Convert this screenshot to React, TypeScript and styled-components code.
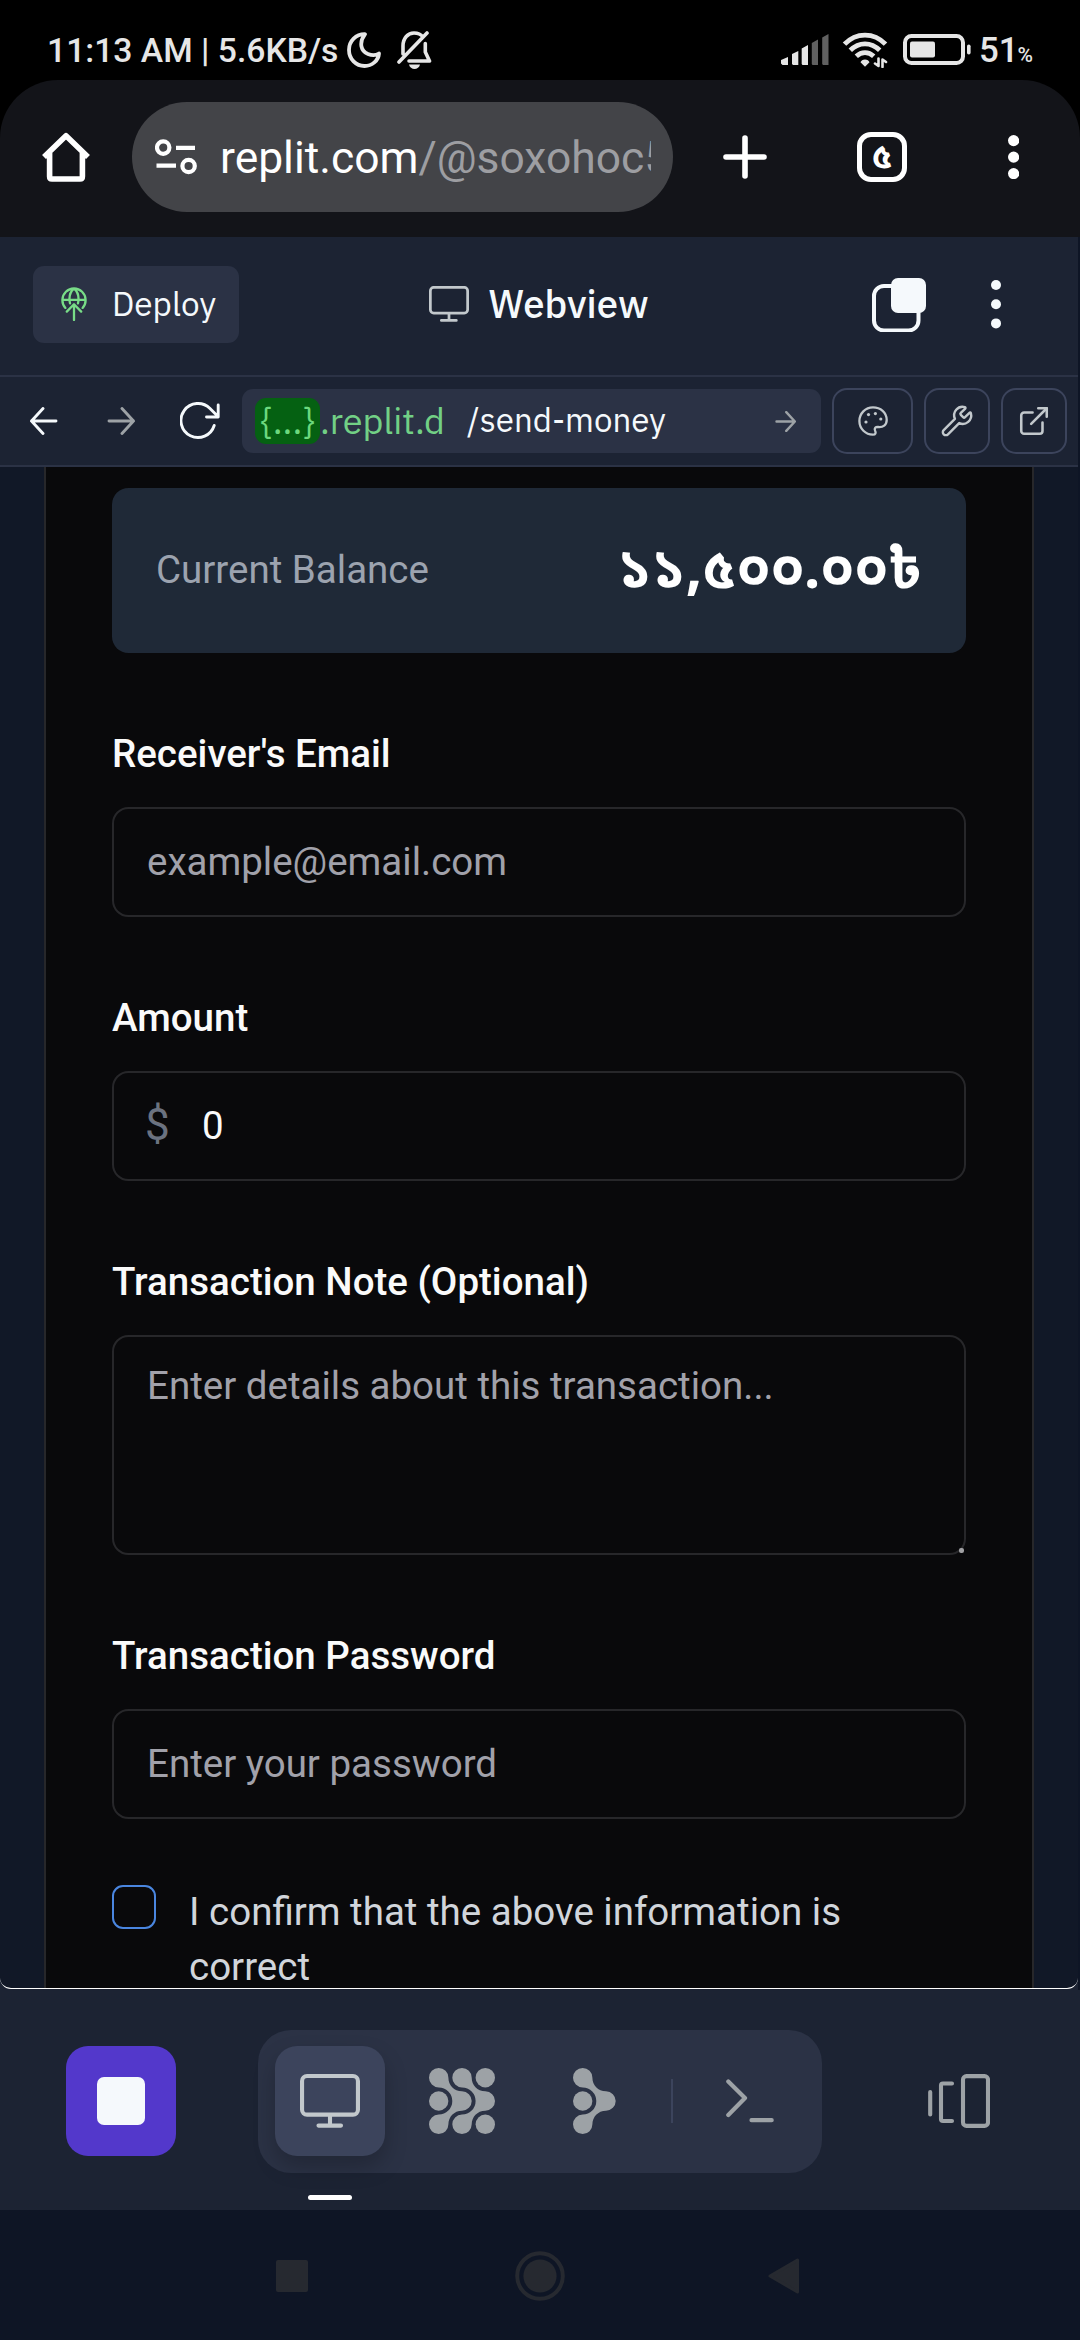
import React from "react";
import styled, { createGlobalStyle } from "styled-components";
import { ExternalLink, Wrench } from "lucide-react";

const GlobalStyle = createGlobalStyle`
  *, *::before, *::after { box-sizing: border-box; }
  body { margin: 0; background: #0e1525; }
  svg { display: block; flex: none; }
`;

const roboto = `Roboto, "Noto Sans", sans-serif`;
const plex = `"IBM Plex Sans", Roboto, "Noto Sans", sans-serif`;
const bengali = `"Noto Sans Bengali", Roboto, "Noto Sans", sans-serif`;

const Screen = styled.div`
  width: 1080px;
  height: 2340px;
  display: flex;
  flex-direction: column;
  overflow: hidden;
  background: #0e1525;
  font-family: ${roboto};
`;

/* ---------- Android status bar ---------- */

const StatusBar = styled.div`
  flex: none;
  height: 80px;
  padding: 21px 47px 0;
  display: flex;
  justify-content: space-between;
  background: #000;
  color: #e6e6e6;
`;

const StatusGroup = styled.div`
  display: flex;
  align-items: center;
  height: 57px;
`;

const StatusText = styled.span<{ $ml?: number; $size?: number }>`
  margin-left: ${(p) => p.$ml ?? 0}px;
  padding-top: 1px;
  font-size: ${(p) => p.$size ?? 33.7}px;
  font-weight: 500;
  line-height: 57px;
  white-space: nowrap;
`;

const Percent = styled.small`
  margin-left: -1px;
  font-size: 21px;
  line-height: 1;
`;

const Glyph = styled.svg<{ $ml?: number }>`
  margin-left: ${(p) => p.$ml ?? 0}px;
  fill: none;
  stroke: currentColor;
  stroke-linecap: round;
  stroke-linejoin: round;
`;

const Battery = styled.svg`
  margin-left: 15px;
`;

/* ---------- Browser bar ---------- */

const BrowserBackdrop = styled.div`
  flex: none;
  background: #000;
`;

const BrowserBar = styled.div`
  height: 157px;
  padding: 0 0 3px 41px;
  display: flex;
  align-items: center;
  border-radius: 58px 58px 0 0;
  background: #131419;
  color: #fff;
`;

const Omnibox = styled.div`
  flex: 1;
  min-width: 0;
  height: 110px;
  margin-left: 41px;
  padding: 0 22px 0 23px;
  display: flex;
  align-items: center;
  border-radius: 55px;
  background: #434448;
`;

const Address = styled.div`
  flex: 1;
  min-width: 0;
  margin-left: 23px;
  padding-top: 2px;
  overflow: hidden;
  white-space: nowrap;
  font-size: 44.4px;
  line-height: 60px;
`;

const AddressPath = styled.span`
  color: #9d9ea2;
`;

const BarSlot = styled.div<{ $width: number }>`
  width: ${(p) => p.$width}px;
  display: flex;
  justify-content: center;
`;

const TabCount = styled.div`
  width: 50px;
  height: 50px;
  display: flex;
  align-items: center;
  justify-content: center;
  border: 5.5px solid #fff;
  border-radius: 14px;
  font: 700 34px / 33px ${bengali};
  padding-top: 4px;
`;

/* ---------- Workspace header ---------- */

const Header = styled.header`
  flex: none;
  width: 1078px;
  height: 140px;
  padding: 0 77px 3px 33px;
  display: grid;
  grid-template-columns: 1fr auto 1fr;
  align-items: center;
  border-bottom: 2px solid #2b3245;
  background: #1c2333;
  color: #f5f9fc;
  font-family: ${plex};
`;

const DeployButton = styled.button`
  width: 206px;
  height: 77px;
  padding: 0 0 2px 28px;
  display: flex;
  align-items: center;
  gap: 25px;
  border: 0;
  border-radius: 11px;
  background: #2b3245;
  color: #f5f9fc;
  font: 400 33.3px / 44px ${plex};
`;

const PaneTitle = styled.div`
  display: flex;
  align-items: center;
  gap: 19px;
  margin-left: 44px;
  padding-bottom: 2px;
  font-size: 38.4px;
  font-weight: 500;
  line-height: 48px;
`;

const TitleIcon = styled.span`
  color: #c2c8cc;
`;

const HeaderActions = styled.div`
  display: flex;
  align-items: center;
  justify-content: flex-end;
  gap: 65px;
`;

/* ---------- Webview toolbar ---------- */

const Toolbar = styled.div`
  flex: none;
  width: 1078px;
  height: 90px;
  padding: 0 11px;
  display: flex;
  align-items: center;
  gap: 11px;
  border-bottom: 2px solid #2b3245;
  background: #1c2333;
  color: #f5f9fc;
`;

const NavButton = styled.button<{ $muted?: boolean }>`
  flex: none;
  width: 66px;
  height: 66px;
  padding: 0;
  display: flex;
  align-items: center;
  justify-content: center;
  border: 0;
  background: none;
  color: ${(p) => (p.$muted ? "#9da2a6" : "#f5f9fc")};
`;

const UrlField = styled.div`
  flex: 1;
  height: 64px;
  padding: 0 25px 0 13px;
  display: flex;
  align-items: center;
  border-radius: 11px;
  background: #2b3245;
  font: 400 33.1px / 44px ${plex};
`;

const HostBadge = styled.span`
  width: 65px;
  height: 46px;
  display: flex;
  align-items: center;
  justify-content: center;
  border-radius: 11px;
  background: #056112;
  color: #6cd97e;
  font-size: 36.1px;
`;

const Host = styled.span`
  width: 147px;
  color: #72d085;
  font-size: 36px;
`;

const Path = styled.span`
  flex: 1;
  padding-bottom: 2px;
`;

const SubmitArrow = styled.span`
  color: #9da2a6;
`;

const ToolButton = styled(NavButton)<{ $width?: number }>`
  width: ${(p) => p.$width ?? 66}px;
  border: 2px solid #3c445c;
  border-radius: 15px;
  color: #c2c8cc;
`;

/* ---------- Web page ---------- */

const WebviewArea = styled.div`
  flex: none;
  width: 1078px;
  height: 1523px;
  padding-bottom: 1px;
  background: #1c2333;
`;

const WebPage = styled.main`
  height: 1522px;
  padding: 0 44px;
  overflow: hidden;
  border-bottom: 1px solid #fff;
  border-radius: 0 0 11px 11px;
  background: #111827;
`;

const Card = styled.div`
  height: 100%;
  padding: 21px 66px 0;
  display: flex;
  flex-direction: column;
  gap: 66px;
  border: 2px solid #27272a;
  border-width: 0 2px;
  background: #09090b;
  color: #fafafa;
  font-size: 38.5px;
  line-height: 55px;
`;

const Balance = styled.section`
  flex: none;
  height: 165px;
  padding: 0 44px;
  display: flex;
  align-items: center;
  justify-content: space-between;
  border-radius: 16.5px;
  background: #1f2937;
`;

const BalanceLabel = styled.span`
  padding-bottom: 2px;
  color: #9ca3af;
`;

const BalanceValue = styled.strong`
  padding-top: 7px;
  color: #fff;
  font: 700 55.8px / 77px ${bengali};
  white-space: nowrap;
`;

const Field = styled.div`
  display: flex;
  flex-direction: column;
`;

const Label = styled.label`
  margin-bottom: 18px;
  font-weight: 500;
  line-height: 70px;
`;

const Control = styled.div<{ $tall?: boolean }>`
  position: relative;
  height: ${(p) => (p.$tall ? 220 : 110)}px;
  padding: ${(p) => (p.$tall ? "21px 33px" : "0 33px 2px")};
  display: flex;
  align-items: ${(p) => (p.$tall ? "flex-start" : "center")};
  border: 2px solid #27272a;
  border-radius: 16.5px;
`;

const Placeholder = styled.span`
  color: #a1a1aa;
`;

const Currency = styled.span`
  width: 57px;
  margin-left: -2px;
  color: #6b7280;
  font-size: 44px;
`;

const ResizeGrip = styled.i`
  position: absolute;
  right: 0;
  bottom: 0;
  width: 5px;
  height: 5px;
  border-radius: 2px;
  background: #a0a0a3;
`;

const ConfirmRow = styled.label`
  display: flex;
  gap: 33px;
  color: #d1d5db;
`;

const ConfirmText = styled.span`
  margin-top: -1px;
`;

const Checkbox = styled.span`
  flex: none;
  width: 44px;
  height: 44px;
  border: 2px solid #4a86e0;
  border-radius: 11px;
`;

/* ---------- Workspace dock ---------- */

const Dock = styled.nav`
  flex: none;
  height: 220px;
  padding: 2px 66px 0;
  display: flex;
  align-items: center;
  justify-content: space-between;
  background: #1c2333;
`;

const StopButton = styled.button`
  width: 110px;
  height: 110px;
  padding: 0;
  display: flex;
  align-items: center;
  justify-content: center;
  border: 0;
  border-radius: 22px;
  background: #5338cb;
`;

const StopSquare = styled.span`
  width: 48px;
  height: 48px;
  border-radius: 7px;
  background: #f5f9fc;
`;

const Tabs = styled.div`
  height: 143px;
  padding: 0 17px;
  display: flex;
  align-items: center;
  gap: 22px;
  border-radius: 33px;
  background: #2b3245;
`;

const DockTab = styled.button<{ $active?: boolean }>`
  position: relative;
  width: 110px;
  height: 110px;
  padding: 0;
  display: flex;
  align-items: center;
  justify-content: center;
  border: 0;
  border-radius: 22px;
  background: ${(p) => (p.$active ? "#3c445c" : "transparent")};
  box-shadow: ${(p) => (p.$active ? "0 11px 22px rgba(2, 2, 3, 0.22)" : "none")};
  color: ${(p) => (p.$active ? "#c2c8cc" : "#9da2a6")};
`;

const ActiveMark = styled.span`
  position: absolute;
  left: 33px;
  bottom: -44px;
  width: 44px;
  height: 5px;
  border-radius: 3px;
  background: #fff;
`;

const Divider = styled.span`
  width: 2px;
  height: 44px;
  background: #3c445c;
`;

/* ---------- Android navigation ---------- */

const SystemNav = styled.div`
  flex: none;
  height: 130px;
  padding: 1px 0 0 276px;
  display: grid;
  grid-template-columns: 239px 253px 32px;
  align-items: center;
  background: #0e1525;
  color: #262930;
`;

/* ---------- Drawings ---------- */

const Monitor = ({ width }: { width: number }) => (
  <Glyph width={width} height={width * 0.9} viewBox="0 0 60 54" strokeWidth={4.1}>
    <rect x="2.05" y="2.05" width="55.9" height="38.6" rx="5" />
    <path d="M30 41V51.5M18.5 51.6H41" />
  </Glyph>
);

const PaletteIcon = () => (
  <Glyph width="30" height="30" viewBox="0 0 30 30" strokeWidth={2.3}>
    <path d="M15 1.4C7.3 1.4 1.4 7.4 1.4 15C1.4 22.8 7.6 28.7 14.8 28.7C17.8 28.7 18 26.6 17.2 25C15.8 22 17.6 20.8 20.2 21C25 21.5 28.7 19 28.7 14C28.7 6.4 22.5 1.4 15 1.4Z" />
    <g fill="currentColor" stroke="none">
      <circle cx="10.5" cy="8.6" r="1.6" />
      <circle cx="17.4" cy="7.6" r="1.6" />
      <circle cx="22.8" cy="13" r="1.6" />
      <circle cx="8" cy="16" r="1.6" />
    </g>
  </Glyph>
);

const branchPath =
  "M9.7 0A9.7 9.7 0 0 1 19.4 9.7C19.4 17 25 23.3 33 23.3A9.7 9.7 0 0 1 33 42.7C25 42.7 19.4 49 19.4 56.3A9.7 9.7 0 0 1 9.7 66A9.7 9.7 0 0 1 9.7 46.6A13.6 13.6 0 0 0 9.7 19.4A9.7 9.7 0 0 1 9.7 0Z";

const Branch = () => (
  <svg width="43" height="66" viewBox="0 0 43 66" fill="currentColor">
    <path d={branchPath} />
    <circle cx="9.7" cy="33" r="9.7" />
  </svg>
);

const Lattice = () => (
  <svg width="66" height="66" viewBox="0 0 66 66" fill="currentColor">
    <path d={branchPath} />
    <path d={branchPath} transform="translate(23.3 0)" />
    <circle cx="9.7" cy="33" r="9.7" />
    <circle cx="56.3" cy="9.7" r="9.7" />
    <circle cx="56.3" cy="56.3" r="9.7" />
  </svg>
);

const Arrow = ({ size, flip }: { size: number; flip?: boolean }) => (
  <Glyph width={size} height={size} viewBox="0 0 28 28" strokeWidth={size > 24 ? 2.9 : 3.2}>
    <path d={flip ? "M26 14H1.5M13 1.5L1.5 14L13 26.5" : "M2 14H26.5M15 1.5L26.5 14L15 26.5"} />
  </Glyph>
);

const Dots = ({ gap, r }: { gap: number; r: number }) => (
  <svg width={r * 2} height={gap * 2 + r * 2} fill="currentColor">
    {[0, 1, 2].map((i) => (
      <circle key={i} cx={r} cy={r + i * gap} r={r} />
    ))}
  </svg>
);

export default function App() {
  return (
    <Screen>
      <GlobalStyle />
      <StatusBar>
        <StatusGroup>
          <StatusText>11:13 AM | 5.6KB/s</StatusText>
          <Glyph $ml={9} width="34" height="36" viewBox="0 0 34 36" strokeWidth={3.8}>
            <path d="M18 2.2C9 2 2 9 2 18C2 27 9 34 17.5 34C25 34 31.5 28.5 32 21.5C29 23.4 25 23.6 21 22C14 19 11.5 11 18 2.2Z" />
          </Glyph>
          <Glyph $ml={16} width="35" height="38" viewBox="0 0 35 38" strokeWidth={3.6}>
            <path d="M6 23V15C6 7 11 2 17 2C21 2 24 3.4 26 6M28.3 12.5V21L32.5 30H12M2 31L30 2" />
            <path d="M12 33.6H23C22.4 36.6 20 38 17.5 38C15 38 12.6 36.6 12 33.6Z" fill="currentColor" stroke="none" />
          </Glyph>
        </StatusGroup>
        <StatusGroup>
          <svg width="48" height="31" viewBox="0 0 48 31" fill="currentColor">
            <path d="M0 26L7 23V31H1.5L0 29.5ZM11 20L17.3 17V31H12L11 30ZM20.7 14.5L27 11V31H21.5L20.7 30Z" />
            <path d="M30.8 9L37 5.5V31H31.5L30.8 30ZM41.2 3.5L47.5 0V31H42L41.2 30Z" fill="#606060" />
          </svg>
          <Glyph $ml={13} width="46" height="36" viewBox="0 0 46 36" strokeWidth={4.8}>
            <path
              d="M2.5 12.2C14 0 32 0 43.5 12.2M8.3 18.3C17 9.6 29 9.6 37.7 18.3M14.3 24.3C19.5 19.4 26.5 19.4 31.7 24.3"
              strokeLinecap="butt"
            />
            <path d="M23 27.4C20.8 27.4 19 28.6 18.5 30.2L23 34.8L27.5 30.2C27 28.6 25.2 27.4 23 27.4Z" fill="currentColor" stroke="none" />
            <path d="M36.5 26.5V34L33 31.5M40.5 35V27.5L44 30" strokeWidth="2.6" />
          </Glyph>
          <Battery width="68" height="31" viewBox="0 0 68 31" fill="currentColor">
            <rect x="2" y="2" width="58" height="27" rx="6.5" fill="none" stroke="currentColor" strokeWidth="4" />
            <rect x="7" y="7.5" width="25" height="16" rx="2" />
            <rect x="64" y="10.5" width="3.6" height="10" rx="1.8" />
          </Battery>
          <StatusText $ml={8} $size={34.8}>
            51<Percent>%</Percent>
          </StatusText>
        </StatusGroup>
      </StatusBar>

      <BrowserBackdrop>
        <BrowserBar>
          <Glyph width="50" height="50" viewBox="0 0 50 50" strokeWidth={5.6}>
            <path d="M3 25L25 3.8L47 25M8.6 21V44.5Q8.6 47 11 47H39Q41.4 47 41.4 44.5V21" strokeLinecap="butt" />
          </Glyph>
          <Omnibox>
            <Glyph width="42" height="36" viewBox="0 0 42 36" strokeWidth={4.2}>
              <circle cx="8.2" cy="8.6" r="6.2" />
              <circle cx="33.6" cy="27" r="6.2" />
              <path d="M21 8.8H40M1.5 26.6H21" strokeLinecap="butt" />
            </Glyph>
            <Address>
              replit.com<AddressPath>/@soxohoc5</AddressPath>
            </Address>
          </Omnibox>
          <BarSlot $width={144}>
            <Glyph width="44" height="44" viewBox="0 0 44 44" strokeWidth={5.6}>
              <path d="M22 3V41M3 22H41" />
            </Glyph>
          </BarSlot>
          <BarSlot $width={130}>
            <TabCount>৫</TabCount>
          </BarSlot>
          <BarSlot $width={133}>
            <Dots gap={16.5} r={5.6} />
          </BarSlot>
        </BrowserBar>
      </BrowserBackdrop>

      <Header>
        <DeployButton>
          <Glyph width="26" height="34" viewBox="0 0 26 34" strokeWidth={2.3} color="#78dc87">
            <path d="M4.4 20.9A11.6 11.6 0 1 1 21.6 20.9M1.4 12.8H24.6M9 16.3C7.8 11 9 5 13 1.4C17 5 18.2 11 17 16.3M13 33V17.5M5.8 24.6L13 17.2L20.2 24.6" />
          </Glyph>
          Deploy
        </DeployButton>
        <PaneTitle>
          <TitleIcon>
            <Monitor width={40} />
          </TitleIcon>
          Webview
        </PaneTitle>
        <HeaderActions>
          <svg width="54" height="54" viewBox="0 0 54 54">
            <rect x="2" y="8" width="44.5" height="44.5" rx="10" fill="none" stroke="#f5f9fc" strokeWidth="4" />
            <rect x="19" y="0" width="35" height="35" rx="7" fill="#f5f9fc" />
          </svg>
          <Dots gap={19.2} r={5} />
        </HeaderActions>
      </Header>

      <Toolbar>
        <NavButton>
          <Arrow size={28} flip />
        </NavButton>
        <NavButton $muted>
          <Arrow size={28} />
        </NavButton>
        <NavButton>
          <Glyph $ml={4} width="40" height="38" viewBox="0 0 40 38" strokeWidth={2.9}>
            <path d="M34.2 23.5A17 17 0 1 1 30 6.5L38 14.5M38.2 3V15H26.5" />
          </Glyph>
        </NavButton>
        <UrlField>
          <HostBadge>{"{...}"}</HostBadge>
          <Host>.replit.d</Host>
          <Path>/send-money</Path>
          <SubmitArrow>
            <Arrow size={21} />
          </SubmitArrow>
        </UrlField>
        <ToolButton $width={81}>
          <PaletteIcon />
        </ToolButton>
        <ToolButton>
          <Wrench size={34} strokeWidth={1.7} />
        </ToolButton>
        <ToolButton>
          <ExternalLink size={34} strokeWidth={1.8} />
        </ToolButton>
      </Toolbar>

      <WebviewArea>
        <WebPage>
          <Card>
            <Balance>
              <BalanceLabel>Current Balance</BalanceLabel>
              <BalanceValue>১১,৫০০.০০৳</BalanceValue>
            </Balance>
            <Field>
              <Label>Receiver's Email</Label>
              <Control>
                <Placeholder>example@email.com</Placeholder>
              </Control>
            </Field>
            <Field>
              <Label>Amount</Label>
              <Control>
                <Currency>$</Currency>
                <span>0</span>
              </Control>
            </Field>
            <Field>
              <Label>Transaction Note (Optional)</Label>
              <Control $tall>
                <Placeholder>Enter details about this transaction...</Placeholder>
                <ResizeGrip />
              </Control>
            </Field>
            <Field>
              <Label>Transaction Password</Label>
              <Control>
                <Placeholder>Enter your password</Placeholder>
              </Control>
            </Field>
            <ConfirmRow>
              <Checkbox />
              <ConfirmText>I confirm that the above information is correct</ConfirmText>
            </ConfirmRow>
          </Card>
        </WebPage>
      </WebviewArea>

      <Dock>
        <StopButton>
          <StopSquare />
        </StopButton>
        <Tabs>
          <DockTab $active>
            <Monitor width={60} />
            <ActiveMark />
          </DockTab>
          <DockTab>
            <Lattice />
          </DockTab>
          <DockTab>
            <Branch />
          </DockTab>
          <Divider />
          <DockTab>
            <Glyph width="48" height="44" viewBox="0 0 48 44" strokeWidth={4.2}>
              <path d="M2.3 2.5L19 19L2.3 36M25.5 41.2H45.7" />
            </Glyph>
          </DockTab>
        </Tabs>
        <DockTab>
          <Glyph width="62" height="54" viewBox="0 0 62 54" strokeWidth={4.1}>
            <path d="M2.2 18V40.5M24 9.5H15Q13 9.5 13 11.5V45Q13 47 15 47H24" />
            <rect x="35" y="2.1" width="25" height="49.8" rx="3.5" />
          </Glyph>
        </DockTab>
      </Dock>

      <SystemNav>
        <svg width="32" height="32" fill="currentColor">
          <rect width="32" height="32" rx="2" />
        </svg>
        <svg width="50" height="50" viewBox="0 0 50 50" fill="currentColor">
          <circle cx="25" cy="25" r="22.8" fill="none" stroke="currentColor" strokeWidth="4" />
          <circle cx="25" cy="25" r="16.6" />
        </svg>
        <Glyph width="32" height="36" viewBox="0 0 32 36" strokeWidth={3}>
          <path d="M29.5 2V34L2 18Z" fill="currentColor" />
        </Glyph>
      </SystemNav>
    </Screen>
  );
}
